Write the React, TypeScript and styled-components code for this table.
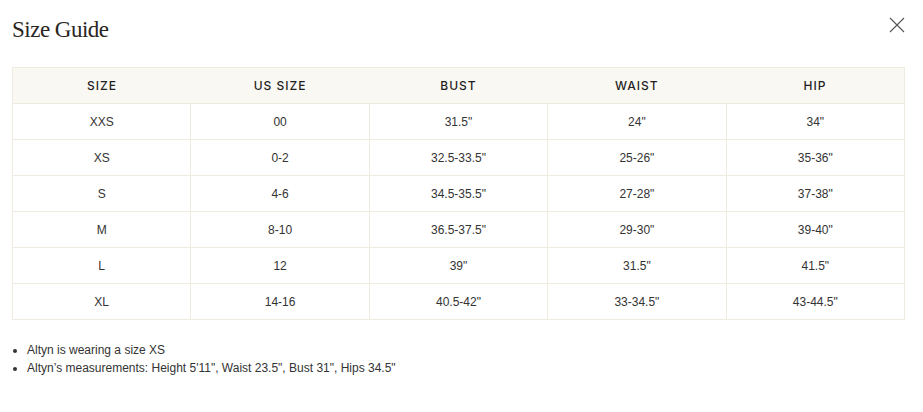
import React from "react";
import styled, { createGlobalStyle } from "styled-components";

const GlobalStyle = createGlobalStyle`
  html, body { margin: 0; padding: 0; background: #ffffff; }
  body { font-family: "Liberation Sans", Arial, sans-serif; color: #2b2b2b; }
`;

const Wrapper = styled.div`
  width: 893px;
  padding: 16px 18px 0 12px;
`;

const TopBar = styled.div`
  display: flex;
  justify-content: space-between;
  align-items: flex-start;
  height: 28px;
`;

const Title = styled.h1`
  margin: 0;
  font-family: "Liberation Serif", "Times New Roman", serif;
  font-weight: 400;
  font-size: 23px;
  line-height: 28px;
  letter-spacing: -0.5px;
  color: #2a2522;
`;

const CloseButton = styled.button`
  margin-top: 1px;
  padding: 0;
  width: 16px;
  height: 16px;
  border: none;
  background: none;
  display: flex;
  cursor: pointer;
  color: #555;
`;

const Table = styled.table`
  margin-top: 23px;
  width: 893px;
  border-collapse: collapse;
  table-layout: fixed;
  border: 1px solid #efebe0;
`;

const HeadCell = styled.th`
  height: 35px;
  padding: 0;
  background: #faf8f3;
  font-family: Inter, "Liberation Sans", Arial, sans-serif;
  font-size: 12px;
  font-weight: 500;
  letter-spacing: 1px;
  text-transform: uppercase;
  color: #1f1f1f;
  text-align: center;
  vertical-align: middle;
  border-bottom: 1px solid #efebe0;
`;

const Cell = styled.td`
  height: 35px;
  padding: 0;
  font-size: 12px;
  color: #333;
  text-align: center;
  vertical-align: middle;
  border: 1px solid #efebe0;
`;

const Notes = styled.ul`
  margin: 21px 0 0 0;
  padding-left: 15px;
  font-size: 12px;
  line-height: 18px;
  color: #333;
`;

const Note = styled.li``;

const headers = ["Size", "US Size", "Bust", "Waist", "Hip"];
const rows = [
  ["XXS", "00", '31.5"', '24"', '34"'],
  ["XS", "0-2", '32.5-33.5"', '25-26"', '35-36"'],
  ["S", "4-6", '34.5-35.5"', '27-28"', '37-38"'],
  ["M", "8-10", '36.5-37.5"', '29-30"', '39-40"'],
  ["L", "12", '39"', '31.5"', '41.5"'],
  ["XL", "14-16", '40.5-42"', '33-34.5"', '43-44.5"'],
];

export default function App() {
  return (
    <>
      <GlobalStyle />
      <Wrapper>
        <TopBar>
          <Title>Size Guide</Title>
          <CloseButton aria-label="Close">
            <svg width="16" height="16" viewBox="0 0 16 16" fill="none">
              <path d="M1 1L15 15M15 1L1 15" stroke="currentColor" strokeWidth="1.1" />
            </svg>
          </CloseButton>
        </TopBar>
        <Table>
          <thead>
            <tr>
              {headers.map((h) => (
                <HeadCell key={h}>{h}</HeadCell>
              ))}
            </tr>
          </thead>
          <tbody>
            {rows.map((r) => (
              <tr key={r[0]}>
                {r.map((c, i) => (
                  <Cell key={i}>{c}</Cell>
                ))}
              </tr>
            ))}
          </tbody>
        </Table>
        <Notes>
          <Note>Altyn is wearing a size XS</Note>
          <Note>Altyn’s measurements: Height 5'11", Waist 23.5", Bust 31", Hips 34.5"</Note>
        </Notes>
      </Wrapper>
    </>
  );
}
